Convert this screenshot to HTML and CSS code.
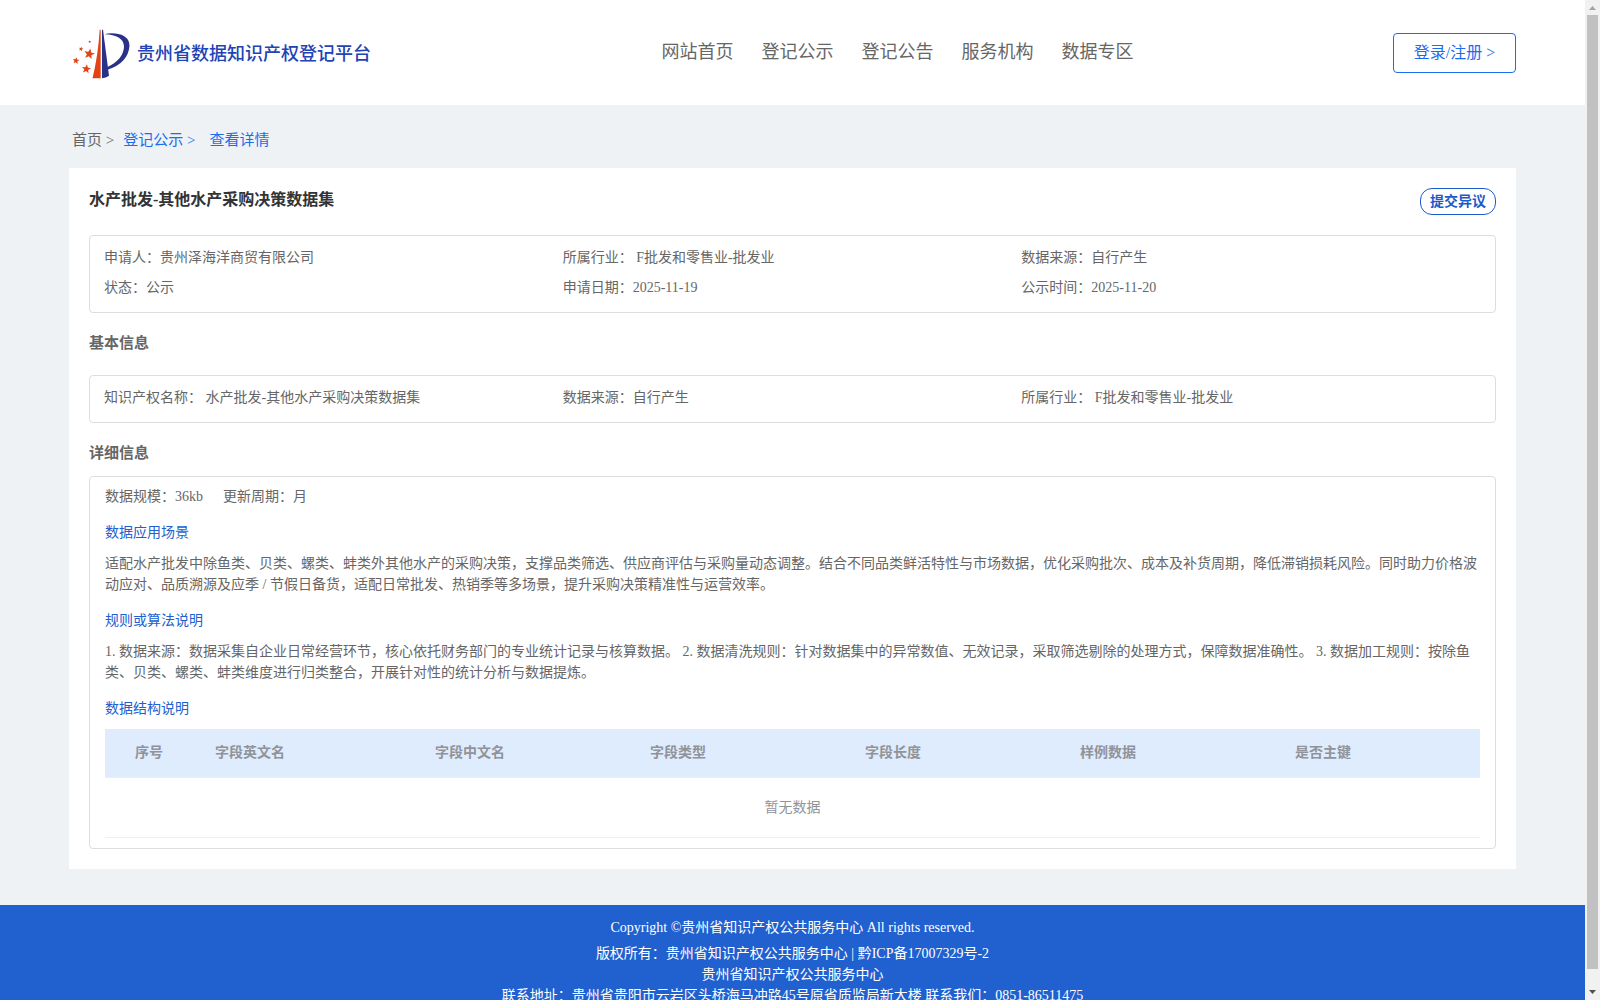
FILE: index.html
```html
<!DOCTYPE html>
<html lang="zh-CN">
<head>
<meta charset="utf-8">
<meta name="viewport" content="width=device-width, initial-scale=1">
<title>贵州省数据知识产权登记平台</title>
<link rel="stylesheet" href="styles.css">
</head>
<body>
<div class="shell">
  <div class="page">
    <header class="header">
      <a class="brand" href="#">
        <svg class="brand-mark" viewBox="0 0 58 52" aria-hidden="true">
          <defs><path id="star" d="M0 -10L2.600 -3.400L9.500 -3.100L4.100 1.300L5.900 8.100L0 4.300L-5.900 8.100L-4.100 1.300L-9.500 -3.100L-2.600 -3.400Z"/></defs>
          <path fill="#e24315" d="M27.700 .7H28.700V49.300H20.500Q26 27 27.700 .7Z"/>
          <path fill="#2a3188" d="M30 .7H31L37 46.700Q34 48.800 30 49.300Z"/>
          <path fill="#2a3188" d="M32.500 5.300Q37 4 43 4.500Q57.500 6 57.500 17Q56 34 36 40.500L35.500 38Q52 30 52 17Q51 6 32.500 5.300Z"/>
          <g fill="#e24315">
            <use href="#star" transform="translate(17.300 25) rotate(12) scale(.56)"/>
            <use href="#star" transform="translate(4 31.700) rotate(8) scale(.36)"/>
            <use href="#star" transform="translate(14.300 40) rotate(8) scale(.48)"/>
            <use href="#star" transform="translate(9 20) rotate(15) scale(.24)"/>
            <use href="#star" transform="translate(17.700 12.800) scale(.16)"/>
          </g>
        </svg>
        <span>贵州省数据知识产权登记平台</span>
      </a>
      <nav class="nav">
        <a href="#">网站首页</a><a href="#">登记公示</a><a href="#">登记公告</a><a href="#">服务机构</a><a href="#">数据专区</a>
      </nav>
      <button class="login" type="button">登录/注册 &gt;</button>
    </header>

    <main class="main">
      <nav class="crumbs" aria-label="面包屑">
        <a class="crumb-home" href="#">首页 &gt;</a>
        <a href="#">登记公示 &gt;</a>
        <a class="crumb-current" href="#">查看详情</a>
      </nav>

      <article class="card">
        <div class="card-head">
          <h1>水产批发-其他水产采购决策数据集</h1>
          <button class="object" type="button">提交异议</button>
        </div>
        <div class="box summary">
          <div>申请人：贵州泽海洋商贸有限公司</div>
          <div>所属行业： F批发和零售业-批发业</div>
          <div>数据来源：自行产生</div>
          <div>状态：公示</div>
          <div>申请日期：2025-11-19</div>
          <div>公示时间：2025-11-20</div>
        </div>

        <h2 class="basic-title">基本信息</h2>
        <div class="box summary">
          <div>知识产权名称： 水产批发-其他水产采购决策数据集</div>
          <div>数据来源：自行产生</div>
          <div>所属行业： F批发和零售业-批发业</div>
        </div>

        <h2 class="detail-title">详细信息</h2>
        <div class="box detail">
          <div class="meta"><span>数据规模：36kb</span><span>更新周期：月</span></div>
          <h3>数据应用场景</h3>
          <p>适配水产批发中除鱼类、贝类、螺类、蚌类外其他水产的采购决策，支撑品类筛选、供应商评估与采购量动态调整。结合不同品类鲜活特性与市场数据，优化采购批次、成本及补货周期，降低滞销损耗风险。同时助力价格波动应对、品质溯源及应季 / 节假日备货，适配日常批发、热销季等多场景，提升采购决策精准性与运营效率。</p>
          <h3>规则或算法说明</h3>
          <p>1. 数据来源：数据采集自企业日常经营环节，核心依托财务部门的专业统计记录与核算数据。 2. 数据清洗规则：针对数据集中的异常数值、无效记录，采取筛选剔除的处理方式，保障数据准确性。 3. 数据加工规则：按除鱼类、贝类、螺类、蚌类维度进行归类整合，开展针对性的统计分析与数据提炼。</p>
          <h3>数据结构说明</h3>
          <table class="fields">
            <colgroup><col class="col-index"><col class="col-name"><col class="col"><col class="col"><col class="col"><col class="col"><col></colgroup>
            <thead>
              <tr><th class="index">序号</th><th>字段英文名</th><th>字段中文名</th><th>字段类型</th><th>字段长度</th><th>样例数据</th><th>是否主键</th></tr>
            </thead>
            <tbody>
              <tr><td colspan="7">暂无数据</td></tr>
            </tbody>
          </table>
        </div>
      </article>
    </main>

    <footer class="footer">
      <p class="copyright">Copyright ©贵州省知识产权公共服务中心 All rights reserved.</p>
      <p>版权所有：贵州省知识产权公共服务中心 | 黔ICP备17007329号-2</p>
      <p>贵州省知识产权公共服务中心</p>
      <p>联系地址：贵州省贵阳市云岩区头桥海马冲路45号原省质监局新大楼 联系我们：0851-86511475</p>
    </footer>
  </div>
  <div class="scrollbar" aria-hidden="true">
    <svg viewBox="0 0 15 15"><path fill="#a3a3a3" d="M4 10L7.500 6L11 10Z"/></svg>
    <div class="thumb"></div>
    <svg viewBox="0 0 15 15"><path fill="#505050" d="M4 5L11 5L7.500 9Z"/></svg>
  </div>
</div>
</body>
</html>
```
FILE: styles.css
```css
* { box-sizing: border-box; }
body {
  margin: 0;
  background: #eef2f5;
  color: #666;
  font: 14px/21px "Liberation Serif", "Noto Sans CJK SC", serif;
}
h1, h2, h3, p { margin: 0; }
a { color: inherit; text-decoration: none; }
button { font-family: inherit; background: #fff; cursor: pointer; padding: 0 0 4px; }

.shell { display: flex; height: 100vh; }
.page { flex: 1; min-width: 0; overflow-y: auto; scrollbar-width: none; }

.header {
  display: grid;
  grid-template-columns: 1fr auto 1fr;
  align-items: center;
  height: 105px;
  padding: 0 69px;
  background: #fff;
}
.brand {
  display: flex;
  align-items: center;
  gap: 7px;
  padding: 4px 0 0 3px;
  color: #2343b5;
  font-size: 18px;
  font-weight: 500;
  white-space: nowrap;
}
.brand-mark { width: 58px; height: 52px; }
.nav { display: flex; gap: 28px; margin-left: 210px; font-size: 18px; white-space: nowrap; }
.login {
  justify-self: end;
  width: 123px;
  height: 40px;
  border: 1px solid #1a6dee;
  border-radius: 4px;
  color: #1a6dee;
  font-size: 16px;
}

.main { padding: 0 69px 36px; }
.crumbs {
  display: flex;
  gap: 9px;
  height: 63px;
  padding: 8px 3px 0;
  align-items: center;
  font-size: 15px;
  color: #1a6dee;
}
.crumb-home { color: #666; }
.crumb-current { margin-left: 5px; }

.card { padding: 20px; background: #fff; }
.card-head { display: flex; justify-content: space-between; margin-bottom: 20px; }
h1 { font-size: 16px; line-height: 24px; color: #333; }
.object {
  width: 76px;
  height: 27px;
  border: 1px solid #1b5bc9;
  border-radius: 12px;
  color: #1b5bc9;
  font-size: 14px;
  font-weight: bold;
}
.box { border: 1px solid #ddd; border-radius: 4px; }
.summary {
  display: grid;
  grid-template-columns: repeat(3, 1fr);
  padding: 7px 15px 9px 14px;
  line-height: 30px;
}
h2 { font-size: 15px; line-height: 20px; }
.basic-title { margin: 20px 0 22px; }
.detail-title { margin: 20px 0 13px; }
.detail { padding: 9px 15px 10px; }
.meta { display: flex; gap: 20px; }
h3 { margin: 15px 0 10px; font-size: 14px; line-height: 21px; font-weight: normal; color: #2160cf; }

.fields { width: 100%; table-layout: fixed; border-collapse: collapse; color: #909399; }
.col-index { width: 100px; }
.col-name { width: 220px; }
.col { width: 215px; }
.fields th { height: 48px; padding: 0 10px; background: #dfecfe; text-align: left; }
.fields .index { padding-left: 30px; }
.fields td { height: 60px; padding: 0; text-align: center; }
.fields tr { border-bottom: 1px solid #ebeef5; }

.footer { padding: 12px 0 10px; background: #2160cf; color: #fff; text-align: center; }
.copyright { margin-bottom: 5px; }

.scrollbar { display: flex; flex-direction: column; width: 15px; background: #f1f1f1; }
.scrollbar svg { width: 15px; height: 15px; }
.thumb { flex: 1; margin: 0 2px 16px; background: #c1c1c1; }
```
